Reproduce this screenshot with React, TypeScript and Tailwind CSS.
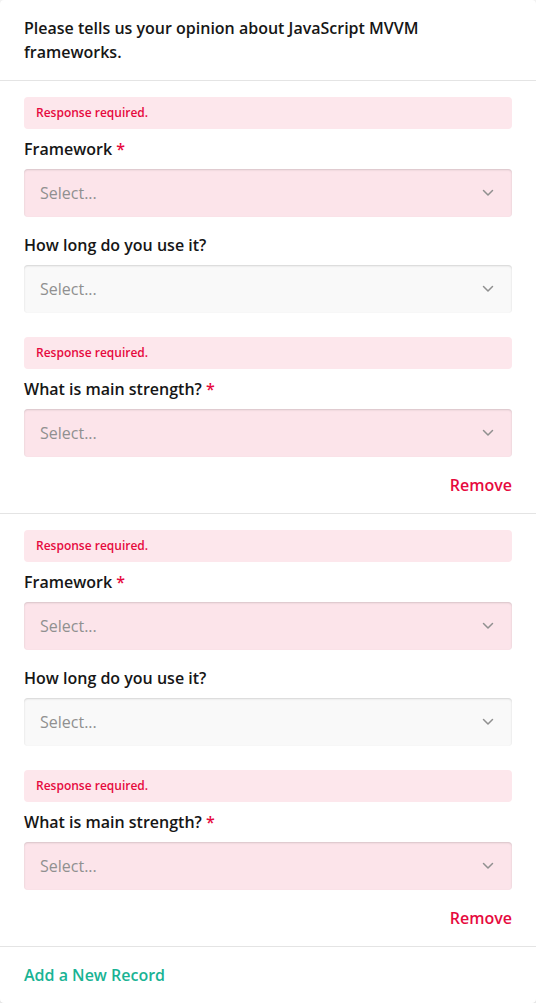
import React from "react";

const Chevron = () => (
  <svg width="12" height="8" viewBox="0 0 12 8" fill="none">
    <path d="M1.5 1.5 L6 6 L10.5 1.5" stroke="#909090" strokeWidth="1.5" strokeLinecap="round" strokeLinejoin="round" />
  </svg>
);

const ErrorBox = () => (
  <div className="rounded-[4px] bg-[#fde7ec] px-3 py-2 text-[12px] leading-4 font-semibold text-[#e60a3e]">
    Response required.
  </div>
);

const Select = ({ error }: { error?: boolean }) => (
  <div
    className={`flex h-12 items-center justify-between rounded-[4px] pl-4 pr-[18px] shadow-[inset_0_1px_2px_rgba(0,0,0,0.15)] ${
      error ? "bg-[#fce4ea]" : "bg-[#f9f9f9]"
    }`}
  >
    <span className="text-[16px] leading-6 text-[#909090]">Select...</span>
    <Chevron />
  </div>
);

const Question = ({ title, required, error }: { title: string; required?: boolean; error?: boolean }) => (
  <div className="flex flex-col gap-2">
    {error && <ErrorBox />}
    <div className="text-[16px] leading-6 font-semibold text-[#161616]">
      {title}
      {required && <span className="text-[#e60a3e]"> *</span>}
    </div>
    <Select error={error} />
  </div>
);

const Panel = () => (
  <div className="border-t border-[#e4e4e4] px-6 pt-4 pb-4">
    <Question title="Framework" required error />
    <div className="mt-4">
      <Question title="How long do you use it?" />
    </div>
    <div className="mt-6">
      <Question title="What is main strength?" required error />
    </div>
    <div className="mt-4 flex justify-end">
      <span className="text-[16px] leading-6 font-semibold text-[#e60a3e]">Remove</span>
    </div>
  </div>
);

export default function App() {
  return (
    <div className="min-h-[1003px] bg-[#f3f3f3]" style={{ fontFamily: '"Open Sans", "Noto Sans", sans-serif' }}>
      <div className="rounded-[4px] bg-white shadow-[0_1px_2px_rgba(0,0,0,0.12)]">
        <div className="px-6 py-4 text-[16px] leading-6 font-semibold text-[#161616]">
          Please tells us your opinion about JavaScript MVVM
          <br />
          frameworks.
        </div>
        <Panel />
        <Panel />
        <div className="border-t border-[#e4e4e4] px-6 py-4">
          <span className="text-[16px] leading-6 font-semibold text-[#19b394]">Add a New Record</span>
        </div>
      </div>
    </div>
  );
}
